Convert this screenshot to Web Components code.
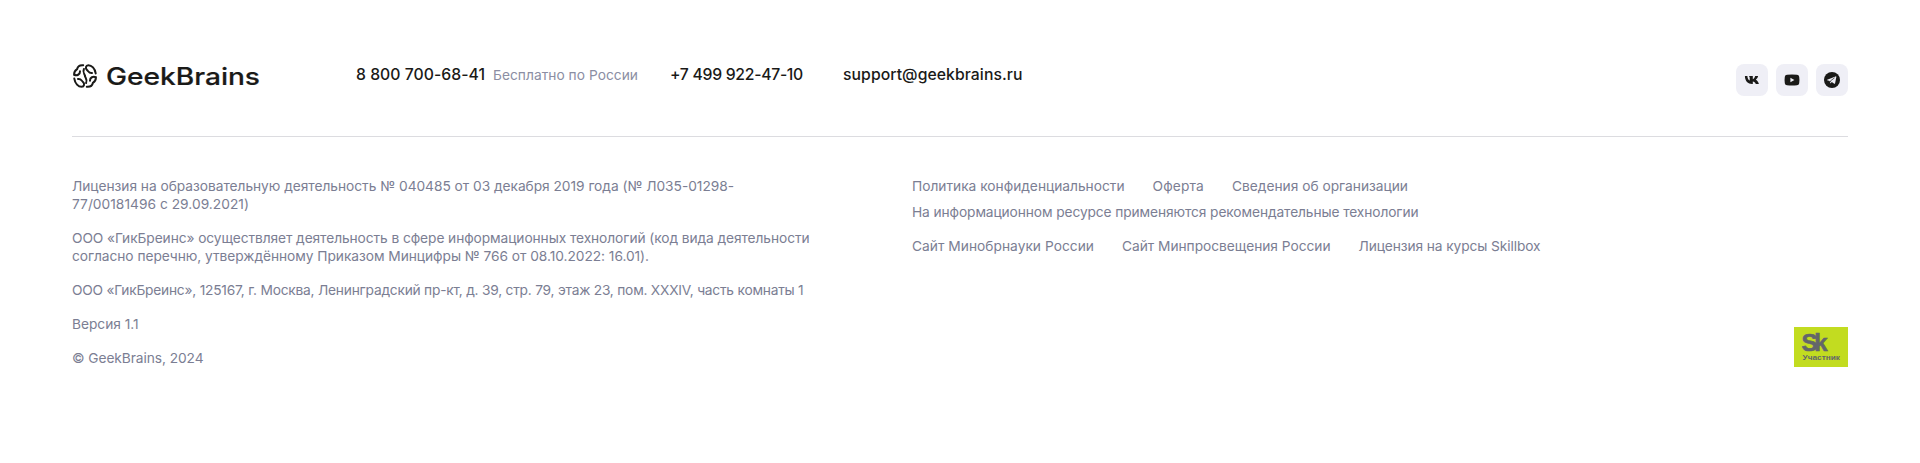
<!DOCTYPE html>
<html lang="ru">
<head>
<meta charset="utf-8">
<title>GeekBrains</title>
<style>
body { margin: 0; background: #fff; font-family: Inter, "Liberation Sans", sans-serif; }
</style>
</head>
<body>
<gb-footer></gb-footer>
<script>
function define(name, html) {
  const template = document.createElement('template');
  template.innerHTML = html;
  customElements.define(name, class extends HTMLElement {
    constructor() {
      super();
      this.attachShadow({ mode: 'open' }).append(template.content.cloneNode(true));
    }
  });
}

// One line of text, tracked so that it takes up the measure given in its "w" attribute.
customElements.define('gb-line', class extends HTMLElement {
  constructor() {
    super();
    this.attachShadow({ mode: 'open' }).innerHTML =
      '<style>:host { display: block; white-space: nowrap; } span { display: inline-block; }</style><span><slot></slot></span>';
  }
  connectedCallback() {
    const target = parseFloat(this.getAttribute('w'));
    this.style.width = target + 'px';
    const span = this.shadowRoot.querySelector('span');
    const natural = span.getBoundingClientRect().width;
    if (natural) span.style.letterSpacing = (target - natural) / this.textContent.length + 'px';
  }
});

define('gb-logo', `
<style>
:host { display: block; width: 188px; height: 24px; }
svg { display: block; overflow: visible; }
text { font: 500 24px Inter, "Liberation Sans", sans-serif; }
</style>
<svg width="188" height="24" viewBox="0 0 188 24" fill="#1a1a18">
  <g fill="none" stroke="#1a1a18" stroke-width="2" stroke-linecap="round" transform="translate(1)">
    <g>
      <path d="M10.2 1.2C7 .9 4.6 2.6 4.1 5.2C1.9 6.6 1 8.6 1.1 10.8C3.8 11.9 7.2 10.8 7 7.2"/>
      <path d="M1.3 14.6C2 19.6 5.4 22.8 8.6 22.8C11.4 22.8 11.8 19.6 10 18C8.4 16.6 8.2 14.6 5 15"/>
      <path d="M10.9 5C9.2 8.5 11.9 10.3 12 12"/>
    </g>
    <g transform="rotate(180 12 12)">
      <path d="M10.2 1.2C7 .9 4.6 2.6 4.1 5.2C1.9 6.6 1 8.6 1.1 10.8C3.8 11.9 7.2 10.8 7 7.2"/>
      <path d="M1.3 14.6C2 19.6 5.4 22.8 8.6 22.8C11.4 22.8 11.8 19.6 10 18C8.4 16.6 8.2 14.6 5 15"/>
      <path d="M10.9 5C9.2 8.5 11.9 10.3 12 12"/>
    </g>
  </g>
  <text x="34" y="21" textLength="154" lengthAdjust="spacingAndGlyphs" stroke="#1a1a18" stroke-width=".2">GeekBrains</text>
</svg>`);

define('gb-contact', `
<style>
:host { display: flex; align-items: center; gap: 8px; font-size: 15.75px; font-weight: 500; line-height: 24px; color: #1a1a18; white-space: nowrap; }
::slotted([slot=note]) { font-size: 13.75px; font-weight: 400; color: #8b8ea3; }
</style>
<slot></slot><slot name="note"></slot>`);

define('gb-social', `
<style>
:host { display: grid; place-items: center; width: 32px; height: 32px; border-radius: 8px; background: #efeff6; }
</style>
<slot></slot>`);

define('gb-paragraph', `
<style>
:host { display: block; font-size: 13.75px; line-height: 18px; color: #7b7e93; }
</style>
<slot></slot>`);

define('gb-links', `
<style>
:host { display: flex; gap: 28px; font-size: 13.75px; line-height: 18px; color: #7b7e93; white-space: nowrap; }
</style>
<slot></slot>`);

define('gb-resident', `
<style>
:host { display: block; width: 54px; height: 40px; background: #c2dc20; }
svg { display: block; }
text { font-family: "Liberation Sans", Arial, sans-serif; font-weight: 700; fill: #63666a; }
</style>
<svg width="54" height="40" viewBox="0 0 54 40">
  <text x="7.5" y="23.5" font-size="24" textLength="26" lengthAdjust="spacing" stroke="#63666a" stroke-width=".6">Sk</text>
  <text x="8.5" y="33" font-size="7" textLength="37.5" lengthAdjust="spacingAndGlyphs">Участник</text>
</svg>`);

define('gb-footer', `
<style>
:host { display: block; padding: 64px 72px 0; }
header { display: flex; align-items: flex-start; height: 72px; border-bottom: 1px solid #dcdce0; }
.contacts { display: flex; gap: 32px; margin: -1px auto 0 96px; }
.contacts gb-contact:last-child { margin-left: 8px; }
.social { display: flex; gap: 8px; }
svg { display: block; }
.body { display: grid; grid-template-columns: 744px 96px 1fr; padding-top: 40px; }
.legal { display: flex; flex-direction: column; gap: 16px; }
.aside { grid-column: 3; display: flex; flex-direction: column; height: 190px; }
.gap-s { margin-top: 8px; }
.gap-m { margin-top: 16px; }
gb-resident { margin: auto 0 0 auto; }
</style>
<header>
  <gb-logo></gb-logo>
  <div class="contacts">
    <gb-contact><gb-line w="129">8 800 700-68-41</gb-line><gb-line w="145" slot="note">Бесплатно по России</gb-line></gb-contact>
    <gb-contact><gb-line w="133">+7 499 922-47-10</gb-line></gb-contact>
    <gb-contact><gb-line w="179.5">support@geekbrains.ru</gb-line></gb-contact>
  </div>
  <div class="social">
    <gb-social><svg width="16" height="16" viewBox="0 0 16 16"><path fill="#1a1a18" d="M.9 4H3.4C3.5 6.5 4.5 8 5.7 8.4V5.4L5 4H8.8V7.2C9.9 7 10.8 5.5 11.2 4H14.1C13.8 5.6 12.7 7.1 11.8 7.7C13 8.3 14.3 9.6 14.9 12H11.8C11.3 10.6 10.1 9.5 8.8 9.4V12H8.1C4 12 .9 9 .9 4Z"/></svg></gb-social>
    <gb-social><svg width="16" height="16" viewBox="0 0 16 16"><path fill="#1a1a18" fill-rule="evenodd" d="M3 2.7Q8 2.2 13 2.7Q14.9 2.9 15.2 4.7Q15.7 8 15.2 11.3Q14.9 13.1 13 13.3Q8 13.8 3 13.3Q1.1 13.1.8 11.3Q.3 8 .8 4.7Q1.1 2.9 3 2.7ZM6.4 5.7V10.3L10.4 8Z"/></svg></gb-social>
    <gb-social><svg width="16" height="16" viewBox="0 0 16 16"><circle cx="8" cy="8" r="8" fill="#1a1a18"/><path fill="#efeff6" d="M3.2 7.8L11.5 4.4Q12.5 4.1 12.3 5.2L11.1 11.2Q10.9 12.2 9.9 11.6L7.8 10.1L6.7 11.2Q6.3 11.5 6.2 10.9L5.7 9L3.2 8.3Q2.6 8 3.2 7.8Z"/><path fill="none" stroke="#1a1a18" stroke-width=".7" d="M6.4 10.2L6.6 8.8L10.6 5.8"/></svg></gb-social>
  </div>
</header>
<div class="body">
  <div class="legal">
    <gb-paragraph><gb-line w="662">Лицензия на образовательную деятельность № 040485 от 03 декабря 2019 года (№ Л035-01298-</gb-line><gb-line w="177">77/00181496 с 29.09.2021)</gb-line></gb-paragraph>
    <gb-paragraph><gb-line w="737.5">ООО «ГикБреинс» осуществляет деятельность в сфере информационных технологий (код вида деятельности</gb-line><gb-line w="577">согласно перечню, утверждённому Приказом Минцифры № 766 от 08.10.2022: 16.01).</gb-line></gb-paragraph>
    <gb-paragraph><gb-line w="731.5">ООО «ГикБреинс», 125167, г. Москва, Ленинградский пр-кт, д. 39, стр. 79, этаж 23, пом. XXXIV, часть комнаты 1</gb-line></gb-paragraph>
    <gb-paragraph><gb-line w="66.5">Версия 1.1</gb-line></gb-paragraph>
    <gb-paragraph><gb-line w="131.5">© GeekBrains, 2024</gb-line></gb-paragraph>
  </div>
  <div class="aside">
    <gb-links><gb-line w="212.5">Политика конфиденциальности</gb-line><gb-line w="51.5">Оферта</gb-line><gb-line w="176">Сведения об организации</gb-line></gb-links>
    <gb-links class="gap-s"><gb-line w="506.5">На информационном ресурсе применяются рекомендательные технологии</gb-line></gb-links>
    <gb-links class="gap-m"><gb-line w="182">Сайт Минобрнауки России</gb-line><gb-line w="208.5">Сайт Минпросвещения России</gb-line><gb-line w="182">Лицензия на курсы Skillbox</gb-line></gb-links>
    <gb-resident></gb-resident>
  </div>
</div>`);
</script>
</body>
</html>
